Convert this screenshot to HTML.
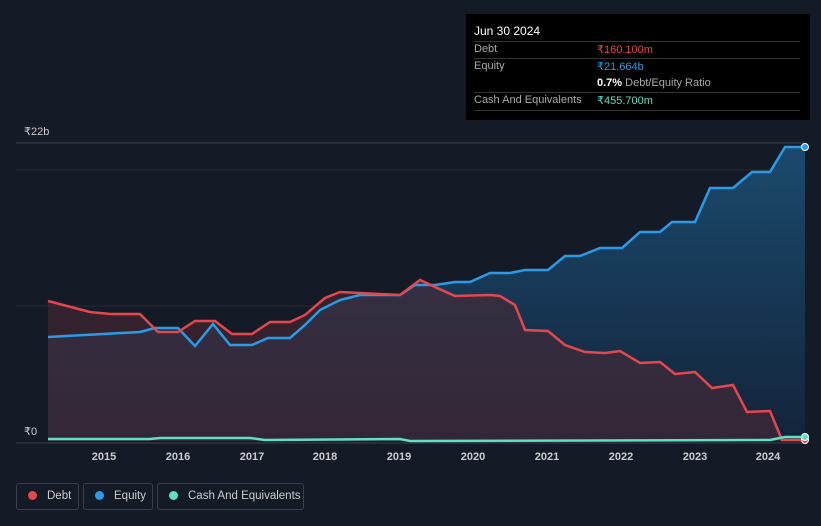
<!DOCTYPE html><html><head><style>
body{margin:0;width:821px;height:526px;background:#151b26;font-family:"Liberation Sans",sans-serif;overflow:hidden;position:relative}
.tt{position:absolute;left:466px;top:14px;width:344px;height:106px;background:#000;color:#fff;font-size:11px}
.row{position:absolute;left:8px;width:326px;border-top:1px solid #333}
.lab{position:absolute;left:8px;color:#aaa}
.val{position:absolute;left:131px}
.leg{position:absolute;top:483px;height:27px;border:1px solid #3a404c;border-radius:3px;color:#ccc;font-size:11.5px;line-height:25px;box-sizing:border-box;white-space:nowrap}
.dot{display:inline-block;width:9px;height:9px;border-radius:50%;margin:0 10px 0 11px;vertical-align:-1px}
</style></head><body>
<div class="tt">
<div style="position:absolute;left:8px;top:10px;font-size:12px">Jun 30 2024</div>
<div class="row" style="top:27px"></div>
<div class="lab" style="top:29px">Debt</div><div class="val" style="top:29px;color:#e5474d">₹160.100m</div>
<div class="row" style="top:44px"></div>
<div class="lab" style="top:46px">Equity</div><div class="val" style="top:46px;color:#2b9be8">₹21.664b</div>
<div class="val" style="top:63px"><b>0.7%</b> <span style="color:#aaa">Debt/Equity Ratio</span></div>
<div class="row" style="top:78px"></div>
<div class="lab" style="top:80px">Cash And Equivalents</div><div class="val" style="top:80px;color:#5ce0c8">₹455.700m</div>
<div class="row" style="top:96px"></div>
</div>
<svg width="821" height="526" style="position:absolute;left:0;top:0">
<defs><linearGradient id="g" x1="0" y1="0" x2="0" y2="1"><stop offset="0" stop-color="#1b4a6e"/><stop offset="1" stop-color="#13243a"/></linearGradient></defs>
<line x1="16" y1="143" x2="805" y2="143" stroke="#3a404c"/>
<line x1="16" y1="170" x2="805" y2="170" stroke="#262c38"/>
<line x1="16" y1="306" x2="805" y2="306" stroke="#262c38"/>
<line x1="16" y1="443" x2="805" y2="443" stroke="#3a404c"/>
<text x="24" y="135" fill="#ccc" font-size="11">₹22b</text>
<text x="24" y="435" fill="#ccc" font-size="11">₹0</text>
<path d="M48,337 L140,332 155,328 178,328 195,346 213,324 230,345 252,345 268,338 290,338 305,325 320,310 340,300 360,295 400,295 415,285 435,285 455,282 470,282 490,273 510,273 525,270 548,270 565,256 580,256 600,248 622,248 640,232 660,232 672,222 695,222 710,188 733,188 752,172 770,172 785,147 805,147 L805,441 48,441Z" fill="url(#g)"/>
<path d="M48,301 L90,312 110,314 140,314 158,332 178,332 195,321 215,321 232,334 252,334 270,322 290,322 305,315 325,298 340,292 360,293 400,295 420,280 435,287 455,296 490,295 500,296 515,305 525,330 548,331 565,345 585,352 605,353 620,351 640,363 660,362 675,374 695,372 712,388 733,385 747,412 770,411 782,440 805,440 L805,441 48,441Z" fill="#4a2a35" opacity="0.6"/>
<path d="M48,337 L140,332 155,328 178,328 195,346 213,324 230,345 252,345 268,338 290,338 305,325 320,310 340,300 360,295 400,295 415,285 435,285 455,282 470,282 490,273 510,273 525,270 548,270 565,256 580,256 600,248 622,248 640,232 660,232 672,222 695,222 710,188 733,188 752,172 770,172 785,147 805,147" fill="none" stroke="#2b9be8" stroke-width="2.5"/>
<path d="M48,301 L90,312 110,314 140,314 158,332 178,332 195,321 215,321 232,334 252,334 270,322 290,322 305,315 325,298 340,292 360,293 400,295 420,280 435,287 455,296 490,295 500,296 515,305 525,330 548,331 565,345 585,352 605,353 620,351 640,363 660,362 675,374 695,372 712,388 733,385 747,412 770,411 782,440 805,440" fill="none" stroke="#e5474d" stroke-width="2.5"/>
<path d="M48,439 L150,439 160,438 250,438 265,440 400,439 410,441 770,440 785,437 805,437" fill="none" stroke="#5ce0c8" stroke-width="2.5"/>
<circle cx="805" cy="147" r="3.5" fill="#2b9be8" stroke="#fff"/>
<circle cx="805" cy="440" r="3.5" fill="#e5474d" stroke="#fff"/>
<circle cx="805" cy="437" r="3.5" fill="#5ce0c8" stroke="#fff"/>
<g fill="#ccc" font-size="11" font-weight="bold" text-anchor="middle">
<text x="104" y="460">2015</text><text x="178" y="460">2016</text><text x="252" y="460">2017</text><text x="325" y="460">2018</text><text x="399" y="460">2019</text><text x="473" y="460">2020</text><text x="547" y="460">2021</text><text x="621" y="460">2022</text><text x="695" y="460">2023</text><text x="768" y="460">2024</text></g>
</svg>
<div class="leg" style="left:16px;width:63px"><span class="dot" style="background:#e5474d"></span>Debt</div>
<div class="leg" style="left:83px;width:70px"><span class="dot" style="background:#2b9be8"></span>Equity</div>
<div class="leg" style="left:157px;width:147px"><span class="dot" style="background:#5ce0c8"></span>Cash And Equivalents</div>
</body></html>
